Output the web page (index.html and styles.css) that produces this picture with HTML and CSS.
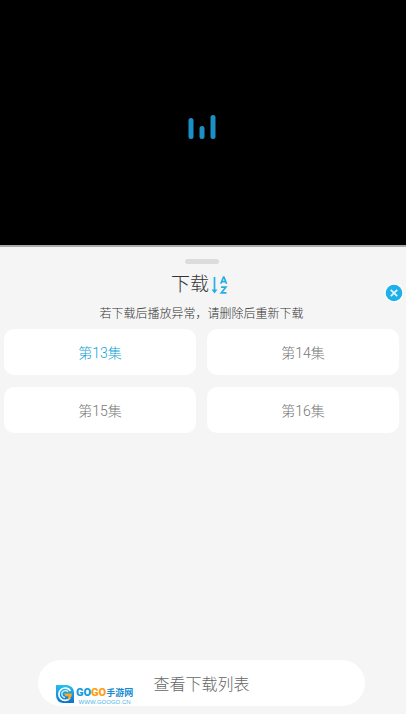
FILE: index.html
```html
<!DOCTYPE html>
<html lang="zh-CN">
<head>
<meta charset="utf-8">
<meta name="viewport" content="width=device-width, initial-scale=1">
<title>下载</title>
<link rel="stylesheet" href="styles.css">
</head>
<body>
<div class="player">
  <svg class="loader" viewBox="0 0 28 26" aria-hidden="true">
    <rect x="0.5" y="4" width="5" height="21" rx="2.5"/>
    <rect x="11.5" y="12" width="5" height="13" rx="2.5"/>
    <rect x="22.5" y="1" width="5" height="24" rx="2.5"/>
  </svg>
</div>
<main class="sheet">
  <div class="handle"></div>
  <header class="head">
    <h1 class="title">下载</h1>
    <button class="sort" type="button" aria-label="排序">
      <svg viewBox="0 0 18 20" aria-hidden="true">
        <path d="M3.5 2V16.5" stroke-width="1.7"/>
        <path class="solid" d="M0.5 14.5H6.5L3.5 18.5Z"/>
        <path d="M9.8 8.8L12.5 2H12.9L15.6 8.8M11 6.6H14.6" stroke-width="1.7"/>
        <path d="M10 12.2H14.8L10.4 17.8H15.5" stroke-width="1.8"/>
      </svg>
    </button>
    <button class="close" type="button" aria-label="关闭">
      <svg viewBox="0 0 20 20" aria-hidden="true">
        <circle cx="10" cy="10" r="9.6" fill="#fff"/>
        <circle cx="10" cy="10" r="8.3" fill="#1eb0e8"/>
        <path d="M6.8 6.8L13.2 13.2M13.2 6.8L6.8 13.2" stroke="#e8f8ff" stroke-width="1.7"/>
      </svg>
    </button>
  </header>
  <p class="note">若下载后播放异常，请删除后重新下载</p>
  <div class="episodes">
    <button class="episode active" type="button">第13集</button>
    <button class="episode" type="button">第14集</button>
    <button class="episode" type="button">第15集</button>
    <button class="episode" type="button">第16集</button>
  </div>
  <footer class="foot">
    <button class="list" type="button">查看下载列表</button>
    <div class="brand">
      <svg class="mark" viewBox="0 0 18 18" aria-hidden="true">
        <defs>
          <linearGradient id="blue" x1="0" y1="0" x2="0" y2="1">
            <stop offset="0" stop-color="#27c0ef"/>
            <stop offset="1" stop-color="#0873cb"/>
          </linearGradient>
        </defs>
        <path fill="url(#blue)" d="M0 0H11Q18 1 18 8V18H7Q0 17 0 10Z"/>
        <path fill="none" stroke="#fff" stroke-width="1.7" d="M14.4 6A6.2 6.2 0 1 0 14 13"/>
        <path fill="none" stroke="#d8f4ff" stroke-width="1.3" d="M12 6.8A3.5 3.5 0 1 0 9 12.5"/>
        <path fill="#ffa51e" d="M8 8.6H16Q15.8 13.5 11.5 15L12.5 11.2H9.5Z"/>
      </svg>
      <div class="words">
        <div class="name"><span class="go">GO</span><span class="go warm">GO</span><span class="site">手游网</span></div>
        <div class="url">WWW.GOOGO.CN</div>
      </div>
    </div>
  </footer>
</main>
</body>
</html>
```
FILE: styles.css
```css
* {
  box-sizing: border-box;
}

body {
  margin: 0;
  min-height: 100vh;
  display: flex;
  flex-direction: column;
  background: #f5f5f5;
  color: #333;
  font-family: Roboto, "Noto Sans CJK SC", sans-serif;
}

button {
  margin: 0;
  padding: 0;
  border: 0;
  background: none;
  font: inherit;
  cursor: pointer;
}

svg {
  display: block;
}

.player {
  aspect-ratio: 406 / 247;
  display: flex;
  align-items: center;
  justify-content: center;
  padding: 8px 3px 0 0;
  background: #000;
  border-bottom: 2px solid #aaa;
}

.loader {
  width: 28px;
  height: 26px;
  fill: #1a90c6;
}

.sheet {
  flex: 1;
  display: flex;
  flex-direction: column;
  padding: 12px 7px 8px 4px;
}

.handle {
  width: 34px;
  height: 5px;
  margin: 0 auto;
  border-radius: 3px;
  background: #dcdcdc;
}

.head {
  position: relative;
  display: flex;
  align-items: center;
  justify-content: center;
  gap: 2px;
  height: 41px;
  padding-right: 3px;
}

.title {
  margin: 0;
  font-size: 19px;
  line-height: 24px;
  font-weight: 300;
}

.sort svg {
  width: 18px;
  height: 20px;
  fill: none;
  stroke: #28aee6;
}

.sort .solid {
  fill: #28aee6;
  stroke: none;
}

.close {
  position: absolute;
  right: -5px;
  bottom: 2px;
}

.close svg {
  width: 20px;
  height: 20px;
}

.note {
  margin: 0;
  font-size: 12px;
  line-height: 18px;
  font-weight: 300;
  text-align: center;
}

.episodes {
  display: grid;
  grid-template-columns: 1fr 1fr;
  gap: 12px 11px;
  margin-top: 6px;
}

.episode {
  height: 46px;
  padding-bottom: 1px;
  border-radius: 10px;
  background: #fff;
  color: #777;
  font-size: 14px;
  font-weight: 300;
}

.active {
  color: #0f9fd8;
}

.foot {
  position: relative;
  margin: auto 34px 0;
}

.list {
  display: block;
  width: 100%;
  height: 46px;
  border-radius: 23px;
  background: #fff;
  color: #666;
  font-size: 16px;
  font-weight: 300;
}

.brand {
  position: absolute;
  left: 18px;
  bottom: 1px;
  display: flex;
  align-items: flex-start;
  gap: 2px;
  pointer-events: none;
}

.mark {
  width: 18px;
  height: 18px;
}

.name {
  display: flex;
  align-items: center;
  height: 15px;
}

.go {
  color: #119ddd;
  font-size: 11px;
  font-weight: 900;
}

.warm {
  color: #ffa00c;
}

.site {
  color: #168bd0;
  font-family: "Noto Sans CJK SC", sans-serif;
  font-size: 9px;
  font-weight: 700;
}

.url {
  color: #4db5e6;
  font-family: "Liberation Sans", sans-serif;
  font-size: 6px;
  line-height: 5px;
  text-align: center;
}
```
